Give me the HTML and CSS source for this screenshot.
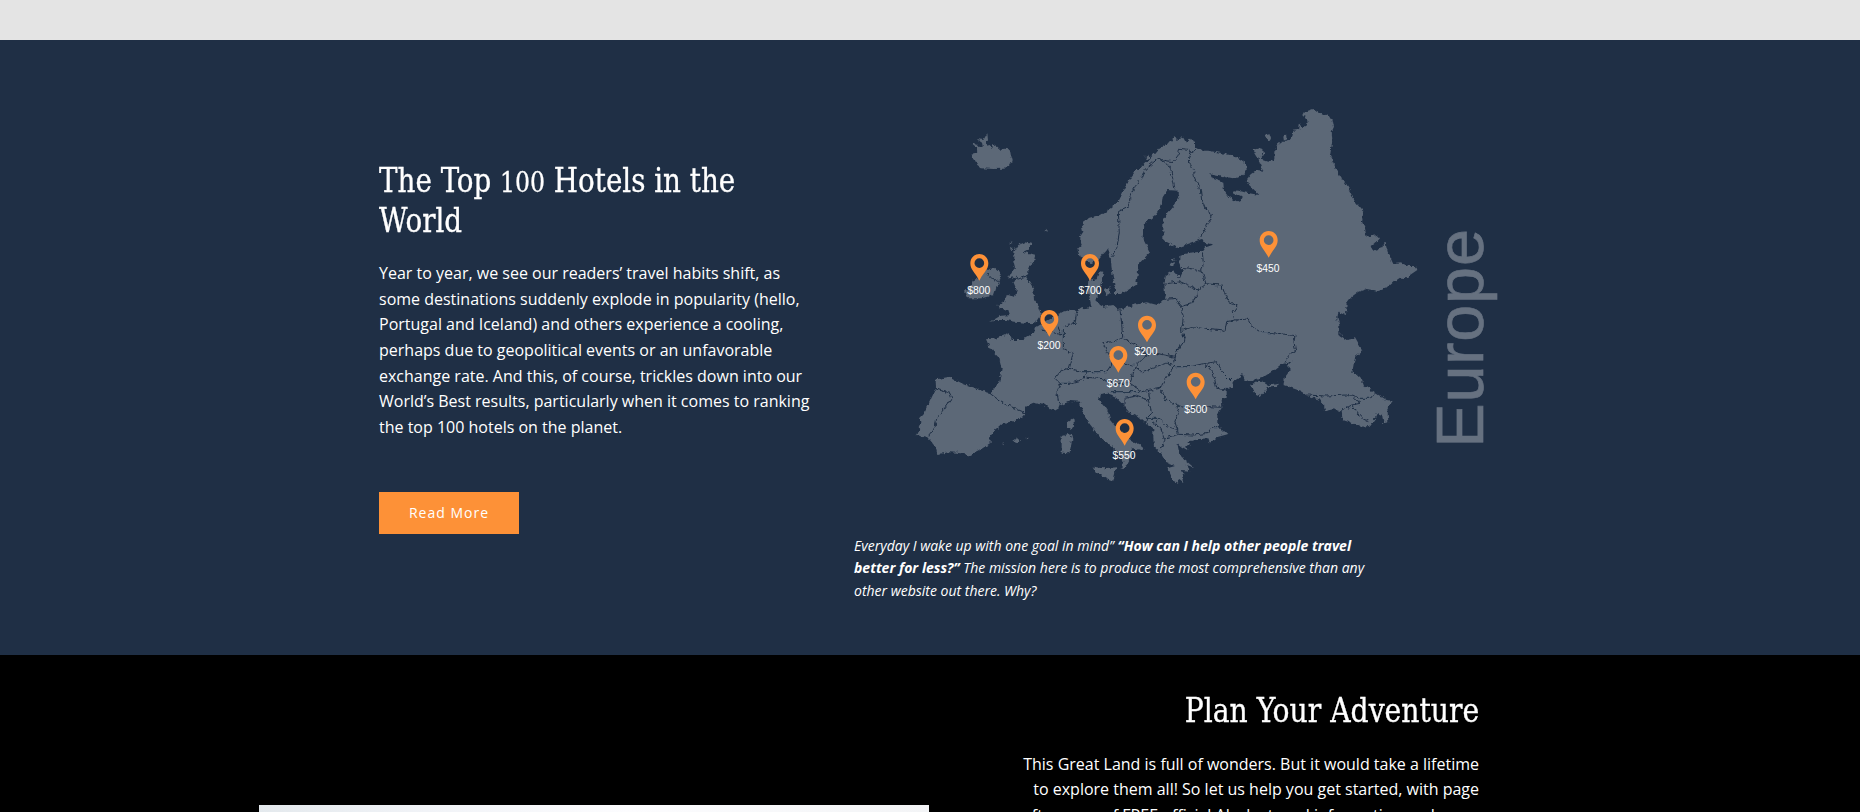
FILE: index.html
```html
<!DOCTYPE html>
<html lang="en">
<head>
<meta charset="utf-8">
<title>The Top 100 Hotels in the World</title>
<link rel="stylesheet" href="styles.css">
</head>
<body>
<div class="strip"></div>
<section class="hotels">
  <div class="intro">
    <h2 class="title">The Top <span class="oldstyle">100</span> Hotels in the<br>World</h2>
    <p class="copy">Year to year, we see our readers’ travel habits shift, as<br>some destinations suddenly explode in popularity (hello,<br>Portugal and Iceland) and others experience a cooling,<br>perhaps due to geopolitical events or an unfavorable<br>exchange rate. And this, of course, trickles down into our<br>World’s Best results, particularly when it comes to ranking<br>the top 100 hotels on the planet.</p>
    <a class="button" href="#">Read More</a>
  </div>
  <div class="map-column">
    <svg class="map" viewBox="-138 0 1938 1230" role="img" aria-label="Map of Europe with hotel prices">
      <defs>
        <filter id="coast" x="-5%" y="-5%" width="110%" height="110%">
          <feTurbulence type="fractalNoise" baseFrequency="0.08" numOctaves="2" seed="4" result="n"/>
          <feDisplacementMap in="SourceGraphic" in2="n" scale="15" xChannelSelector="R" yChannelSelector="G"/>
        </filter>
        <path id="pin" fill-rule="evenodd" d="M0-80C-15-80-27-68-27-52C-27-33-14-26 0 0C14-26 27-33 27-52C27-68 15-80 0-80ZM0-67A14.500 14.500 0 1 1 0-38A14.500 14.500 0 1 1 0-67Z"/>
      </defs>
      <g filter="url(#coast)">
      <g class="land">
        <path d="M540 500L532 478 545 465 540 440 550 425 545 405 555 390 590 380 625 360 655 335 665 315 680 285 690 265 705 245 725 230 745 210 765 190 780 172 802 165 815 150 823 138 830 150 840 145 850 140 858 155 870 146 885 152 885 172 902 182 925 182 960 188 990 195 1020 207 1038 220 1040 240 1025 258 1005 266 980 262 955 255 930 250 940 268 970 278 972 302 985 320 1000 330 1020 335 1028 322 1005 312 1000 300 1020 303 1040 308 1078 315 1060 297 1037 275 1055 253 1070 242 1090 245 1080 222 1075 205 1060 180 1080 175 1092 185 1082 202 1090 210 1105 215 1123 208 1123 185 1132 165 1145 155 1160 155 1175 145 1180 122 1197 120 1200 100 1208 112 1220 105 1218 88 1210 75 1215 65 1240 57 1258 68 1272 72 1285 80 1297 85 1302 110 1295 125 1297 150 1290 195 1310 240 1345 295 1365 335 1390 365 1386 395 1395 415 1400 440 1430 435 1440 445 1428 458 1415 468 1420 482 1445 475 1456 455 1463 485 1480 522 1505 520 1525 528 1548 528 1552 540 1530 555 1525 565 1500 563 1482 575 1460 595 1435 603 1400 597 1375 605 1355 620 1340 640 1338 675 1315 665 1312 685 1318 705 1318 735 1340 750 1365 745 1387 783 1365 800 1357 845 1385 868 1392 888 1425 908 1460 930 1478 933 1462 955 1465 997 1450 1000 1447 975 1432 970 1425 985 1408 1008 1380 1010 1350 995 1328 988 1325 965 1300 958 1275 963 1272 945 1260 930 1225 918 1200 902 1150 885 1155 862 1172 838 1160 828 1178 812 1150 818 1120 842 1095 858 1065 868 1035 873 1025 848 1020 862 998 875 998 890 980 893 980 920 965 930 967 950 952 975 952 1000 960 1012 983 1033 955 1040 930 1058 925 1045 890 1048 865 1055 872 1068 858 1065 862 1080 845 1070 832 1060 837 1085 850 1107 865 1118 882 1133 857 1125 868 1142 845 1140 852 1152 845 1155 850 1180 838 1170 830 1178 820 1172 810 1150 802 1135 825 1128 800 1120 785 1095 772 1080 762 1070 760 1045 760 1015 738 1000 715 980 690 970 670 945 650 925 630 915 635 925 625 908 600 912 597 930 612 945 625 965 630 990 655 1020 685 1045 700 1055 727 1068 730 1083 705 1075 692 1075 695 1095 680 1125 662 1137 670 1115 660 1090 640 1072 600 1042 560 990 545 960 540 935 510 933 485 945 455 963 435 945 400 938 375 950 375 975 345 992 310 1000 270 1035 272 1058 240 1080 207 1097 185 1090 150 1087 112 1092 107 1072 85 1045 50 1036 65 1000 57 985 75 965 108 895 107 868 150 860 185 880 238 900 272 910 298 875 305 835 298 805 270 775 258 748 290 745 330 730 335 750 365 750 402 728 408 712 445 690 475 675 480 668 520 657 530 665 545 655 575 652 568 620 562 600 565 570 590 565 598 543 610 545 605 575 600 590 590 610 590 630 600 645 610 650 640 645 657 660 700 645 740 637 772 645 790 632 795 618 793 580 798 555 818 542 840 565 848 545 838 520 838 497 870 488 905 485 915 472 940 463 912 458 905 447 870 460 830 474 815 465 790 452 790 385 820 350 838 322 835 302 802 300 788 322 785 345 765 375 730 402 728 445 750 487 718 520 708 585 665 612 648 612 638 560 632 505 625 475 600 505 570 520Z"/>
        <path d="M212 195L225 192 232 184 228 170 218 163 228 160 236 168 248 168 246 158 230 147 250 150 262 130 264 150 256 168 270 165 275 178 280 162 292 170 303 180 312 176 330 178 333 195 338 212 330 228 312 236 280 237 245 235 232 225 222 205Z"/>
        <path d="M340 490L355 465 375 457 395 462 385 478 370 485 405 495 402 515 385 530 385 550 378 560 388 575 400 595 402 630 418 652 425 670 405 700 375 698 345 695 320 690 290 690 270 696 300 678 330 675 325 660 300 655 292 645 315 635 320 615 345 620 350 600 340 575 348 560 325 565 335 545 345 535 340 515Z"/>
        <path d="M195 605L210 590 218 572 240 560 260 540 285 533 305 550 300 570 290 590 282 615 245 625 205 625Z"/>
        <path d="M503 995L520 983 522 1005 512 1020 502 1008ZM485 1038L512 1030 517 1050 508 1090 485 1088ZM580 1130L610 1135 650 1132 640 1172 620 1165 590 1148ZM1050 888L1080 870 1105 885 1133 878 1130 890 1105 893 1082 918 1068 912ZM1093 136L1108 132 1113 146 1108 154ZM1150 140L1158 130 1160 150 1152 154ZM612 600L632 592 628 612 618 615ZM645 590L665 600 660 612 645 612ZM737 200L745 194 748 204 738 206ZM808 520L822 517 820 525 810 527ZM815 508L828 505 822 514ZM327 460L340 450 337 460ZM330 470L337 475 333 485ZM437 422L443 418 442 430ZM340 1052L352 1045 360 1052 352 1057ZM303 1062L312 1060 308 1064ZM376 1043L386 1045 380 1048ZM590 605L603 605 602 615 592 612Z"/>
      </g>
      <path class="borders" d="M637 500L650 475 658 430 655 365 685 350 690 320 705 290 725 265 735 238 775 205 795 212 820 215 835 195 838 175 865 178 870 190 865 210 880 240 885 270 900 290 905 330 915 355 937 372 920 410 900 445M870 190L885 180M775 205L810 230 818 265 825 298M907 487L910 520 905 540 918 582 965 585 970 600 985 635 1013 645 997 668 1005 690 1045 687 1055 710 1085 728 1120 728 1185 737 1182 755 1187 785 1170 790 1155 815M845 532L870 535 905 545M793 583L840 575 875 590 895 600 918 582M895 600L895 610 875 640 842 650 830 625 795 628M842 650L850 680 845 720 855 750 830 785 820 820M850 720L880 710 920 718 975 723 980 695 1005 690M660 660L665 700 668 742 640 755 608 758 625 790 640 815 700 825M668 745L690 755 730 780 740 795 770 790 825 802M740 795L705 830 725 845 760 835 800 820 825 830M490 720L490 775 520 790 508 835 545 845 620 845 640 815M425 720L450 725 485 735 475 710M490 710L525 700 530 665M508 835L485 840 465 865 480 880 510 880 545 870 560 850M560 862L600 865 640 880 690 880 700 850 705 830M690 880L705 890 725 905 780 895 800 860 825 830 870 830 915 820 940 850 950 895 980 900M915 820L950 815 965 845 990 870M780 895L800 930 830 945 860 955 900 958 925 950 965 952M830 945L835 970 825 1000 835 1030M790 1045L835 1033 880 1035 925 1030 940 1010 955 1010M630 905L690 905 725 905M675 955L675 925 710 918 745 930 755 970 740 985 738 1000M745 900L750 930M740 985L780 985 800 1010 835 1020M780 985L760 1000 780 1010 795 1050 780 1078M480 880L470 905 475 930 485 942M272 912L310 940 375 968M108 897L150 910 155 925 130 960 110 985 105 1015 85 1040M1220 915L1280 918 1340 915 1380 925 1410 925 1425 910M1320 965L1355 945 1380 940 1360 925M1355 945L1380 980 1408 995M262 550L275 565 295 575M335 560L355 567 380 558"/>
      </g>
      <g class="pins">
        <use href="#pin" x="238" y="572"/><use href="#pin" x="570" y="572"/><use href="#pin" x="1106" y="503"/><use href="#pin" x="448" y="740"/><use href="#pin" x="741" y="757"/><use href="#pin" x="655" y="848"/><use href="#pin" x="887" y="928"/><use href="#pin" x="674" y="1067"/>
      </g>
      <g class="prices">
        <text x="236" y="612">$800</text><text x="570" y="612">$700</text><text x="1104" y="545">$450</text><text x="447" y="777">$200</text><text x="738" y="796">$200</text><text x="655" y="890">$670</text><text x="887" y="969">$500</text><text x="672" y="1106">$550</text>
      </g>
      <text class="region" transform="translate(1748 1073) rotate(-90)" textLength="656">Europe</text>
    </svg>
    <p class="caption">Everyday I wake up with one goal in mind” <strong>“How can I help other people travel<br>better for less?”</strong> The mission here is to produce the most comprehensive than any<br>other website out there. Why?</p>
  </div>
</section>
<section class="adventure">
  <div class="photo"></div>
  <div class="plan">
    <h2 class="title">Plan Your Adventure</h2>
    <p class="copy">This Great Land is full of wonders. But it would take a lifetime<br>to explore them all! So let us help you get started, with page<br>after page of FREE official Alaska travel information and more</p>
  </div>
</section>
</body>
</html>
```
FILE: styles.css
```css
* { box-sizing: border-box; }
body {
  margin: 0;
  height: 812px;
  overflow: hidden;
  background: #000;
  color: #fff;
  font-family: "Open Sans", sans-serif;
  font-size: 16px;
  line-height: 25.6px;
}
p, h2 { margin: 0; white-space: nowrap; }
.strip { height: 40px; background: #e4e4e4; }
.hotels {
  height: 615px;
  padding: 50px 360px 0 379px;
  background: #1f2f45;
  display: grid;
  grid-template-columns: 475px 646px;
}
.intro { padding-top: 71px; }
.title {
  font-family: "DejaVu Serif Condensed", "DejaVu Serif", serif;
  font-stretch: condensed;
  font-weight: 400;
  font-size: 33px;
  line-height: 39.6px;
  transform: scaleX(.935);
  transform-origin: left;
  -webkit-text-stroke: .3px #fff;
}
.oldstyle { font-size: 28px; line-height: 1; }
.intro .copy { margin-top: 21px; }
.button {
  display: block;
  width: 140px;
  height: 42px;
  margin-top: 52px;
  background: #fd9137;
  color: #fff;
  font-size: 14px;
  line-height: 42px;
  letter-spacing: 1px;
  text-align: center;
  text-decoration: none;
}
.map { display: block; width: 646px; height: 410px; }
.land { fill: #5b6777; }
.borders { fill: none; stroke: #1f2f45; stroke-width: 3; }
.pins { fill: #fd9137; }
.prices {
  fill: #fff;
  font-family: "Liberation Sans", sans-serif;
  font-size: 31px;
  text-anchor: middle;
}
.region {
  fill: #667180;
  stroke: #667180;
  stroke-width: 2;
  font-family: "Liberation Sans", sans-serif;
  font-size: 200px;
}
.caption {
  margin-top: 35px;
  font-size: 14px;
  font-style: italic;
  line-height: 22.4px;
}
.adventure {
  height: 157px;
  display: flex;
  justify-content: space-between;
  padding: 0 381px 0 259px;
  overflow: hidden;
}
.photo {
  width: 670px;
  height: 300px;
  margin-top: 150px;
  background: linear-gradient(90deg, #e4e9ed, #f1f3f7 25%, #fcfcfe 55%, #f3f4f6);
}
.plan { padding-top: 36px; text-align: right; }
.plan .title { transform: scaleX(.95); transform-origin: right; }
.plan .copy { margin-top: 21px; }
```
